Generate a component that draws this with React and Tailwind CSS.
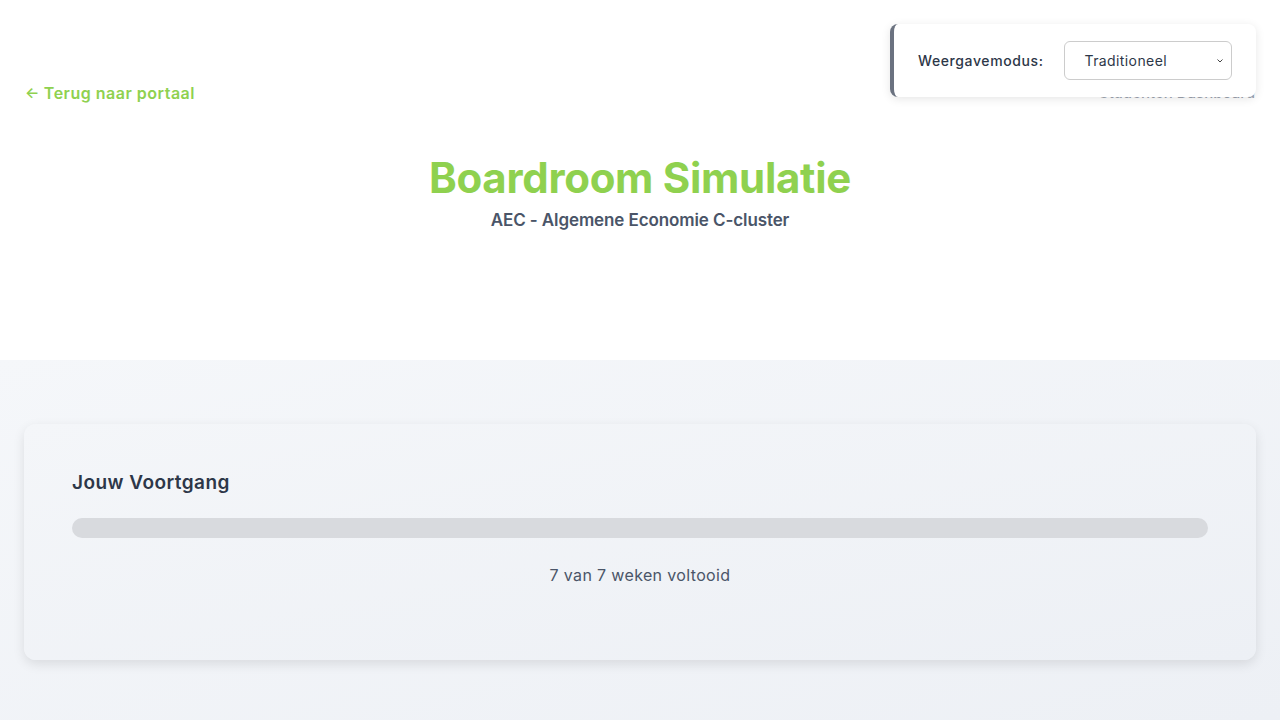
export default function App() {
  return (
    <div className="min-h-[720px] bg-white" style={{ fontFamily: "Inter, 'Noto Sans', sans-serif" }}>
      <header className="relative h-[360px] bg-white px-[25px] pt-[83px]">
        <div className="flex items-center justify-between">
          <a className="flex items-center gap-[4px] text-[16px] font-semibold tracking-[0.5px] text-[#8fd14f] leading-[20px]">
            <span className="text-[15px]">←</span>
            <span>Terug naar portaal</span>
          </a>
          <a className="text-[15px] font-medium text-[#9ca3af] leading-[20px]">Studenten Dashboard</a>
        </div>
        <div className="mt-[49px] text-center">
          <h1 className="text-[42px] font-bold leading-[52px] tracking-[-0.3px] text-[#8fd14f]">Boardroom Simulatie</h1>
          <p className="mt-[5px] text-[17px] font-semibold leading-[22px] tracking-[-0.1px] text-[#4a5568]">AEC - Algemene Economie C-cluster</p>
        </div>
        <div className="absolute right-[24px] top-[24px] flex h-[73px] w-[366px] items-center rounded-[8px] border-l-4 border-[#6b7280] bg-white pl-[24px] shadow-[0_2px_10px_rgba(0,0,0,0.1)]">
          <span className="text-[14px] font-medium tracking-[0.6px] text-[#2d3748]">Weergavemodus:</span>
          <div className="ml-[20px] flex h-[39px] w-[168px] items-center justify-between rounded-[6px] border border-[#cccccc] bg-white pl-[20px] pr-[6px]">
            <span className="text-[14px] tracking-[0.4px] text-[#2d3748]">Traditioneel</span>
            <svg width="10" height="10" viewBox="0 0 10 10" fill="none" stroke="#444" strokeWidth="1">
              <path d="M2.5 3.5 L5 6 L7.5 3.5" />
            </svg>
          </div>
        </div>
      </header>
      <main className="h-[360px] bg-gradient-to-br from-[#f5f7fa] to-[#edf0f5] px-[24px] pt-[64px]">
        <div className="h-[236px] rounded-[12px] bg-gradient-to-br from-[#f4f6f9] to-[#edf0f5] px-[48px] pt-[46px] shadow-[0_4px_12px_rgba(0,0,0,0.1)]">
          <h2 className="text-[19px] font-semibold leading-[26px] tracking-[0.45px] text-[#2d3748]">Jouw Voortgang</h2>
          <div className="mt-[22px] h-[20px] w-full rounded-full bg-[#d8dade]"></div>
          <p className="mt-[26px] text-center text-[16px] leading-[22px] tracking-[0.35px] text-[#4a5568]">7 van 7 weken voltooid</p>
        </div>
      </main>
    </div>
  );
}
